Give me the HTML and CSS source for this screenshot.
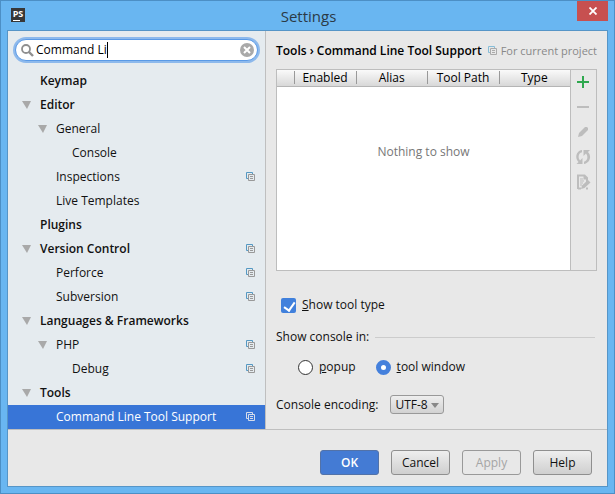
FILE: index.html
```html
<!DOCTYPE html>
<html lang="en">
<head>
  <meta charset="UTF-8" />
  <meta name="viewport" content="width=device-width, initial-scale=1.0" />
  <title>Settings</title>
  <link rel="stylesheet" href="styles.css">
</head>
<body>
  <!-- shared icon: project level setting -->
  <svg class="defs" width="0" height="0">
    <symbol id="project" viewBox="0 0 9 10">
      <path class="back" d="M2 6.5H.5V.5h6V2" fill="none" />
      <path class="front" d="M2.5 2.5h6v6h-6zM4 4.5h3M4 6.5h3" fill="none" />
    </symbol>
  </svg>

  <div class="window">
    <header class="titlebar">
      <div class="app-icon">PS</div>
      <h1>Settings</h1>
      <button class="close" aria-label="Close">
        <svg width="8" height="8" viewBox="0 0 8 8"><path d="M.5 .5l7 7M7.5 .5l-7 7" stroke="#fff" stroke-width="1.8" /></svg>
      </button>
    </header>

    <div class="content">
      <div class="main">
        <nav class="sidebar">
          <div class="search">
            <svg class="magnifier" width="13" height="13" viewBox="0 0 13 13" fill="none" stroke="#8f8f8f"><circle cx="5" cy="5" r="4" stroke-width="1.8" /><path d="M8 8l4 4" stroke-width="2.4" /></svg>
            <input type="text" value="Command Li" aria-label="Search settings" />
            <span class="caret"></span>
            <button class="clear" aria-label="Clear">
              <svg width="14" height="14" viewBox="0 0 14 14"><circle cx="7" cy="7" r="7" fill="#a9a9a9" /><path d="M4 4l6 6M10 4l-6 6" stroke="#fff" stroke-width="2" /></svg>
            </button>
          </div>
          <ul class="tree">
            <li class="top">Keymap</li>
            <li class="top open">Editor</li>
            <li class="sub open">General</li>
            <li class="leaf">Console</li>
            <li class="sub">Inspections<svg class="project"><use href="#project" /></svg></li>
            <li class="sub">Live Templates</li>
            <li class="top">Plugins</li>
            <li class="top open">Version Control<svg class="project"><use href="#project" /></svg></li>
            <li class="sub">Perforce<svg class="project"><use href="#project" /></svg></li>
            <li class="sub">Subversion<svg class="project"><use href="#project" /></svg></li>
            <li class="top open">Languages &amp; Frameworks</li>
            <li class="sub open">PHP<svg class="project"><use href="#project" /></svg></li>
            <li class="leaf">Debug<svg class="project"><use href="#project" /></svg></li>
            <li class="top open">Tools</li>
            <li class="sub selected">Command Line Tool Support<svg class="project"><use href="#project" /></svg></li>
          </ul>
        </nav>

        <section class="panel">
          <div class="crumbs">
            <h2>Tools › Command Line Tool Support</h2>
            <span class="scope"><svg class="project"><use href="#project" /></svg>For current project</span>
          </div>

          <div class="tools">
            <div class="list">
              <table>
                <thead>
                  <tr><th class="narrow"></th><th class="enabled">Enabled</th><th>Alias</th><th>Tool Path</th><th>Type</th></tr>
                </thead>
              </table>
              <p class="empty">Nothing to show</p>
            </div>
            <div class="toolbar">
              <button aria-label="Add"><svg width="16" height="16" viewBox="0 0 16 16"><path d="M8 2v12M2 8h12" stroke="#2fa84f" stroke-width="2" /></svg></button>
              <button aria-label="Remove" disabled><svg width="16" height="16" viewBox="0 0 16 16"><path d="M2 8h12" stroke="#bdbdbd" stroke-width="2" /></svg></button>
              <button aria-label="Edit" disabled><svg width="16" height="16" viewBox="0 0 16 16" fill="#bdbdbd"><path d="M3 13l1-4 6-6h2l1 1v2l-6 6z" /></svg></button>
              <button aria-label="Refresh" disabled>
                <svg width="16" height="16" viewBox="0 0 16 16" fill="#bdbdbd"><path d="M7 1v2.300C3.500 4 2.500 8.500 5 11.500L7.500 9v6H1.500L3.500 13C-.5 9 1 2 7 1zM8.500 1H15l-2 2C17 7 15 14 9 15v-2.300C12.500 12 13.500 7.500 11 4.500L8.500 7z" /></svg>
              </button>
              <button aria-label="Edit source" disabled>
                <svg width="16" height="16" viewBox="0 0 16 16"><path d="M3 15V1.500h6.500L12 4v4M3 14.500h3M9.500 1v3.500H12" fill="none" stroke="#bdbdbd" stroke-width="2" /><path d="M5 5h3M5 7h4M5 9h3M5 11h2" stroke="#bdbdbd" /><path d="M6 15l1-3.500L13 6l2.500 2.500L9.500 14z" fill="#bdbdbd" /><path d="M11 14.500h2" stroke="#bdbdbd" stroke-width="2" /></svg>
              </button>
            </div>
          </div>

          <div class="row check">
            <input type="checkbox" id="showType" checked />
            <label for="showType"><u>S</u>how tool type</label>
          </div>

          <fieldset>
            <legend>Show console in:</legend>
            <div class="row radios">
              <input type="radio" name="console" id="popup" />
              <label for="popup"><u>p</u>opup</label>
              <input type="radio" name="console" id="toolWindow" checked />
              <label for="toolWindow"><u>t</u>ool window</label>
            </div>
          </fieldset>

          <div class="row encoding">
            <label for="encoding">Console encoding:</label>
            <div class="select">
              <select id="encoding"><option>UTF-8</option></select>
            </div>
          </div>
        </section>
      </div>

      <footer>
        <button class="btn primary">OK</button>
        <button class="btn">Cancel</button>
        <button class="btn" disabled>Apply</button>
        <button class="btn">Help</button>
      </footer>
    </div>
  </div>
</body>
</html>
```
FILE: styles.css
```css
* {
  box-sizing: border-box;
}
body {
  margin: 0;
  font-family: "Open Sans", "Noto Sans", sans-serif;
  font-size: 12px;
  line-height: 16px;
  color: #111;
}
button, input, select {
  font: inherit;
  color: inherit;
  margin: 0;
}
button {
  padding: 0;
  border: none;
  background: none;
}
svg {
  display: block;
  flex: none;
}
.defs {
  position: absolute;
}
.window {
  display: flex;
  flex-direction: column;
  min-height: 100vh;
  padding: 0 6px 6px;
  background: #69b6f1;
  border: 1px solid #4c8fc5;
}

/* title bar */
.titlebar {
  display: flex;
  justify-content: space-between;
  align-items: flex-start;
  height: 29px;
}
.app-icon {
  position: relative;
  width: 14px;
  height: 14px;
  margin: 7px 15px 0 4px;
  background: #383838;
  color: #fff;
  font-size: 9px;
  font-weight: bold;
  line-height: 11px;
  text-align: center;
}
.app-icon::after {
  content: "";
  position: absolute;
  left: 2px;
  bottom: 1px;
  width: 7px;
  height: 1px;
  background: #fff;
}
h1 {
  margin: 5px 0 0;
  font-size: 15px;
  line-height: 20px;
  font-weight: normal;
  color: #2b3a46;
}
.close {
  display: flex;
  justify-content: center;
  align-items: center;
  width: 31px;
  height: 20px;
  background: #c75050;
}

.content {
  flex: 1;
  display: flex;
  flex-direction: column;
  background: #e8e8e8;
  border: 1px solid #5695c7;
}
.main {
  flex: 1;
  display: flex;
  border-bottom: 1px solid #bfbfbf;
}

/* left side */
.sidebar {
  flex: 0 0 258px;
  background: #e5ebef;
  border-right: 1px solid #bfbfbf;
}
.search {
  position: relative;
  display: flex;
  align-items: center;
  height: 22px;
  margin: 8px 7px;
  padding: 0 3px 0 5px;
  background: #fff;
  border: 1px solid #5a9ae6;
  border-radius: 11px;
  box-shadow: 0 0 0 2px #8db9ec;
}
.search input {
  flex: 1;
  min-width: 0;
  padding: 0 0 0 2px;
  border: none;
  outline: none;
  background: none;
  color: #000;
}
.caret {
  position: absolute;
  left: 91px;
  top: 2px;
  width: 1px;
  height: 16px;
  background: #000;
}
.tree {
  margin: 0;
  padding: 0;
  list-style: none;
}
.tree li {
  display: flex;
  align-items: center;
  height: 24px;
  padding-right: 10px;
}
.tree .project {
  margin-left: auto;
}
.tree .top {
  padding-left: 32px;
  font-weight: 600;
}
.tree .sub {
  padding-left: 48px;
}
.tree .leaf {
  padding-left: 64px;
}
.tree .open::before {
  content: "";
  margin: 0 9px 0 -18px;
  border: solid transparent;
  border-width: 8px 4px 0 5px;
  border-top-color: #a9a9a9;
}
.tree .selected {
  background: #3875d7;
  color: #fff;
}
.project {
  --back: #5598c2;
  --front: #999;
  width: 9px;
  height: 10px;
}
.back {
  stroke: var(--back);
}
.front {
  stroke: var(--front);
}
.selected .project {
  --back: #d5dceb;
  --front: #d5dceb;
}

/* right side */
.panel {
  flex: 1;
  min-width: 0;
  padding: 12px 10px 12px;
}
.crumbs {
  display: flex;
  justify-content: space-between;
  align-items: center;
  margin-bottom: 10px;
  white-space: nowrap;
}
h2 {
  margin: 0;
  font-size: 12px;
  line-height: 16px;
  font-weight: 600;
  color: #000;
}
.scope {
  display: flex;
  align-items: center;
  gap: 4px;
  font-size: 11px;
  color: #888;
}
.scope .project {
  --back: #86bdd8;
  --front: #aaa;
}
.tools {
  display: flex;
  height: 202px;
  border: 1px solid #bdbdbd;
}
.list {
  flex: 1;
  background: #fff;
}
table {
  width: 100%;
  table-layout: fixed;
  border-collapse: collapse;
}
th {
  position: relative;
  height: 16px;
  padding: 0;
  background: linear-gradient(#fafafa, #d8d8d8);
  border-bottom: 1px solid #b5b5b5;
  color: #000;
  font-weight: normal;
  line-height: 15px;
}
th + th::before {
  content: "";
  position: absolute;
  left: 0;
  top: 1px;
  width: 1px;
  height: 13px;
  background: #999;
}
.narrow {
  width: 17px;
}
.enabled {
  width: 62px;
}
.empty {
  margin: 57px 0 0;
  color: #777;
  text-align: center;
}
.toolbar {
  display: flex;
  flex-direction: column;
  align-items: center;
  gap: 9px;
  width: 26px;
  padding: 4px 1px 0 0;
  border-left: 1px solid #bdbdbd;
}
.row {
  display: flex;
  align-items: center;
}
.check {
  margin: 26px 0 16px;
  padding-left: 5px;
}
input[type="checkbox"],
input[type="radio"] {
  appearance: none;
  position: relative;
  width: 15px;
  height: 15px;
  margin-right: 6px;
}
input[type="checkbox"] {
  background: #4080dc;
  border-radius: 2px;
}
input[type="checkbox"]::after {
  content: "";
  position: absolute;
  left: 5px;
  top: 2px;
  width: 5px;
  height: 9px;
  border: solid #fff;
  border-width: 0 2px 2px 0;
  transform: rotate(35deg);
}
input[type="radio"] {
  background: #fff;
  border: 1px solid #333;
  border-radius: 50%;
}
input[type="radio"]:checked {
  border: 5px solid #4480dc;
}
fieldset {
  margin: 0;
  padding: 0;
  border: none;
}
legend {
  display: flex;
  align-items: center;
  gap: 6px;
  width: 100%;
  padding: 0 2px 0 0;
}
legend::after {
  content: "";
  flex: 1;
  height: 1px;
  background: #ccc;
}
.radios {
  margin: 14px 0 20px;
  padding-left: 22px;
}
.radios label:not(:last-child) {
  margin-right: 20px;
}
.encoding {
  gap: 12px;
}
.select {
  position: relative;
}
.select::after {
  content: "";
  position: absolute;
  right: 5px;
  top: 8px;
  border: solid transparent;
  border-width: 5px 4px 0;
  border-top-color: #888;
}
select {
  appearance: none;
  display: block;
  width: 54px;
  height: 19px;
  padding: 0 0 0 4px;
  background: linear-gradient(#eee, #d2d2d2);
  border: 1px solid #999;
  border-radius: 3px;
}

/* buttons */
footer {
  display: flex;
  justify-content: flex-end;
  gap: 12px;
  padding: 20px 15px 11px;
}
.btn {
  width: 59px;
  height: 25px;
  background: linear-gradient(#eee, #cfcfcf);
  border: 1px solid #8f8f8f;
  border-radius: 3px;
}
.btn.primary {
  background: #447bd4;
  border-color: #5272a8;
  color: #fff;
  font-weight: 600;
}
.btn:disabled {
  background: #e8e8e8;
  border-color: #999;
  color: #a5a5a5;
}
```
